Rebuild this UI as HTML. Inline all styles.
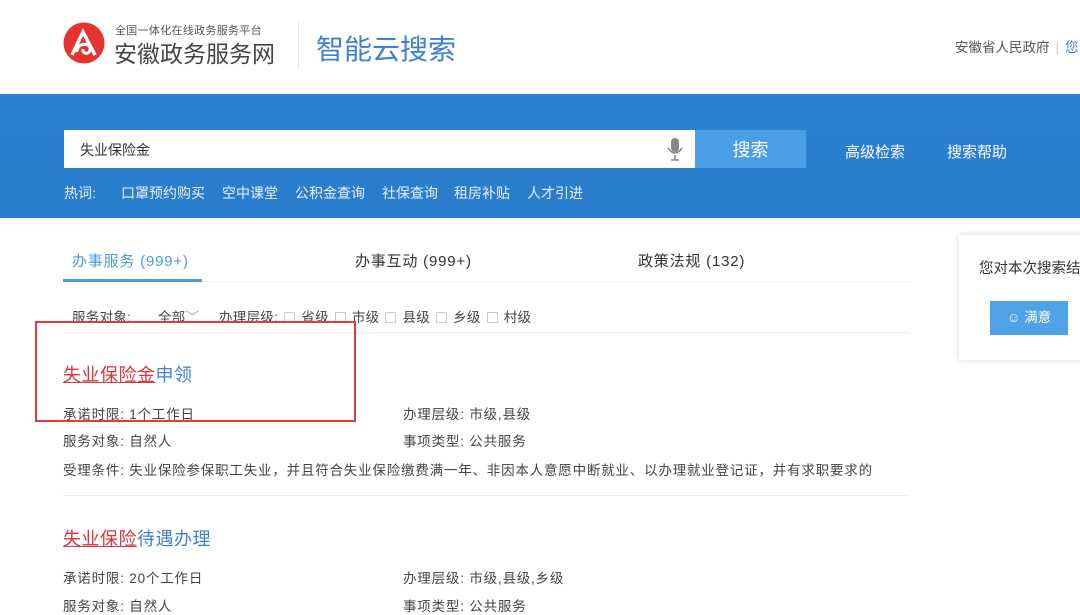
<!DOCTYPE html>
<html><head><meta charset="utf-8"><style>
*{margin:0;padding:0;box-sizing:border-box}
body{width:1080px;height:611px;overflow:hidden;background:#fff;font-family:"Liberation Sans","Noto Sans CJK SC",sans-serif;position:relative;color:#333}
.a{position:absolute;white-space:nowrap}
.cb{display:inline-block;width:11px;height:11px;border:1px solid #ccc;vertical-align:-1px;margin:0 6px 0 6px}
.red{color:#d9363e;text-decoration:underline}
.blu{color:#3f7fd6}
.s{font-size:13.5px;color:#444;letter-spacing:0.8px}
</style></head><body>
<svg class="a" style="left:63px;top:22px" width="42" height="42" viewBox="0 0 42 42">
<circle cx="21" cy="21" r="20.5" fill="#e3342f"/>
<path d="M9 33 L20 10 L32 33" fill="none" stroke="#fff" stroke-width="3.5"/>
<path d="M14 30 C14 20 28 20 27 28 C26 33 19 32 20 27" fill="none" stroke="#fff" stroke-width="3"/>
</svg>
<div class="a" style="left:115px;top:22px;font-size:11px;color:#555;letter-spacing:0.3px">全国一体化在线政务服务平台</div>
<div class="a" style="left:114px;top:35px;font-size:23px;color:#444">安徽政务服务网</div>
<div class="a" style="left:298px;top:22px;width:1px;height:48px;background:#e6e6e6"></div>
<div class="a" style="left:316px;top:28px;font-size:28px;color:#3f80d4">智能云搜索</div>
<div class="a" style="left:955px;top:36px;font-size:13.5px;color:#555">安徽省人民政府<span style="color:#ccc;margin:0 6px">|</span><span style="color:#3f80d4">您</span></div>
<div class="a" style="left:0;top:94px;width:1080px;height:124px;background:linear-gradient(180deg,#2d81d2,#2a7ccc)"></div>
<div class="a" style="left:64px;top:130px;width:631px;height:38px;background:#fff"></div>
<div class="a" style="left:80px;top:140px;font-size:14px;color:#333">失业保险金</div>
<svg class="a" style="left:667px;top:138px" width="16" height="24" viewBox="0 0 16 24"><rect x="4" y="0" width="8" height="14" rx="4" fill="#888"/><path d="M1 10 Q8 20 15 10" fill="none" stroke="#888" stroke-width="1.6"/><path d="M8 17 V22 M4 22 H12" stroke="#888" stroke-width="1.6"/></svg>
<div class="a" style="left:695px;top:130px;width:111px;height:38px;background:#4b9de8;color:#fff;font-size:18px;text-align:center;line-height:40px">搜索</div>
<div class="a" style="left:845px;top:141px;font-size:15px;color:#fff">高级检索</div>
<div class="a" style="left:947px;top:141px;font-size:15px;color:#fff">搜索帮助</div>
<div class="a" style="left:64px;top:183px;font-size:14px;color:#e8f1fb">热词:</div>
<div class="a" style="top:183px;font-size:14px;color:#e8f1fb;left:121px">口罩预约购买</div>
<div class="a" style="top:183px;font-size:14px;color:#e8f1fb;left:222px">空中课堂</div>
<div class="a" style="top:183px;font-size:14px;color:#e8f1fb;left:295px">公积金查询</div>
<div class="a" style="top:183px;font-size:14px;color:#e8f1fb;left:382px">社保查询</div>
<div class="a" style="top:183px;font-size:14px;color:#e8f1fb;left:454px">租房补贴</div>
<div class="a" style="top:183px;font-size:14px;color:#e8f1fb;left:527px">人才引进</div>
<div class="a" style="left:72px;top:250px;font-size:15px;color:#4b9be0;letter-spacing:0.8px">办事服务 (999+)</div>
<div class="a" style="left:63px;top:279px;width:139px;height:3px;background:#4b9be0"></div>
<div class="a" style="left:202px;top:281px;width:708px;height:1px;background:#f0f0f0"></div>
<div class="a" style="left:355px;top:250px;font-size:15px;color:#333;letter-spacing:0.8px">办事互动 (999+)</div>
<div class="a" style="left:638px;top:250px;font-size:15px;color:#333;letter-spacing:0.8px">政策法规 (132)</div>
<div class="a s" style="left:72px;top:306px;letter-spacing:0.3px">服务对象:</div>
<div class="a s" style="left:158px;top:306px;letter-spacing:0.3px">全部<span style="color:#aaa">﹀</span></div>
<div class="a s" style="left:219px;top:306px;letter-spacing:0.3px">办理层级:<span class="cb"></span>省级<span class="cb"></span>市级<span class="cb"></span>县级<span class="cb"></span>乡级<span class="cb"></span>村级</div>
<div class="a" style="left:63px;top:332px;width:847px;height:1px;background:#eee"></div>
<div class="a" style="left:63px;top:361px;font-size:18px;letter-spacing:0.5px"><span class="red">失业保险金</span><span class="blu">申领</span></div>
<div class="a s" style="left:63px;top:403px">承诺时限: 1个工作日</div>
<div class="a s" style="left:403px;top:403px">办理层级: 市级,县级</div>
<div class="a s" style="left:63px;top:430px">服务对象: 自然人</div>
<div class="a s" style="left:403px;top:430px">事项类型: 公共服务</div>
<div class="a s" style="left:63px;top:459px">受理条件: 失业保险参保职工失业，并且符合失业保险缴费满一年、非因本人意愿中断就业、以办理就业登记证，并有求职要求的</div>
<div class="a" style="left:63px;top:495px;width:847px;height:1px;background:#eee"></div>
<div class="a" style="left:35px;top:321px;width:321px;height:101px;border:2px solid #e23b3b"></div>
<div class="a" style="left:63px;top:525px;font-size:18px;letter-spacing:0.5px"><span class="red">失业保险</span><span class="blu">待遇办理</span></div>
<div class="a s" style="left:63px;top:567px">承诺时限: 20个工作日</div>
<div class="a s" style="left:403px;top:567px">办理层级: 市级,县级,乡级</div>
<div class="a s" style="left:63px;top:595px">服务对象: 自然人</div>
<div class="a s" style="left:403px;top:595px">事项类型: 公共服务</div>
<div class="a" style="left:959px;top:235px;width:130px;height:125px;background:#fff;box-shadow:0 0 6px rgba(0,0,0,0.15)"></div>
<div class="a" style="left:979px;top:257px;font-size:14.5px;color:#333">您对本次搜索结</div>
<div class="a" style="left:990px;top:301px;width:78px;height:34px;background:#4fa2e8;color:#fff;font-size:13.5px;line-height:34px;text-align:center">☺ 满意</div>
</body></html>
